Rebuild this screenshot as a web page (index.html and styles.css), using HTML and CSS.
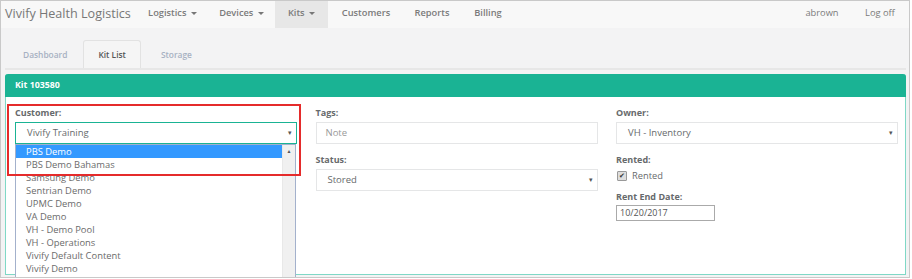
FILE: index.html
```html
<!DOCTYPE html>
<html>
<head>
<meta charset="UTF-8">
<title>Vivify Health Logistics - Kit List</title>
<link rel="stylesheet" href="styles.css">
</head>
<body>
<div class="frame">
  <nav class="navbar">
    <span class="brand">Vivify Health Logistics</span>
    <ul class="nav">
      <li class="w-log">Logistics <span class="caret"></span></li>
      <li class="w-dev">Devices <span class="caret"></span></li>
      <li class="w-kit active">Kits <span class="caret"></span></li>
      <li class="w-cus">Customers</li>
      <li class="w-rep">Reports</li>
      <li class="w-bil">Billing</li>
    </ul>
    <ul class="nav nav-right">
      <li class="w-usr">abrown</li>
      <li class="w-off">Log off</li>
    </ul>
  </nav>

  <div class="content">
    <ul class="tabs">
      <li class="tab">Dashboard</li>
      <li class="tab active">Kit List</li>
      <li class="tab">Storage</li>
    </ul>

    <div class="panel">
      <div class="panel-heading">Kit 103580</div>
      <div class="panel-body">
        <div class="col col-customer">
          <div class="group">
            <label>Customer:</label>
            <div class="select focused">Vivify Training<span class="arrow">▾</span></div>
          </div>
          <div class="listbox">
            <ul class="options">
              <li class="selected">PBS Demo</li>
              <li>PBS Demo Bahamas</li>
              <li>Samsung Demo</li>
              <li>Sentrian Demo</li>
              <li>UPMC Demo</li>
              <li>VA Demo</li>
              <li>VH - Demo Pool</li>
              <li>VH - Operations</li>
              <li>Vivify Default Content</li>
              <li>Vivify Demo</li>
            </ul>
            <div class="scrollbar"><span class="up">▲</span></div>
          </div>
          <div class="highlight"></div>
        </div>

        <div class="col">
          <div class="group">
            <label>Tags:</label>
            <div class="input placeholder">Note</div>
          </div>
          <div class="group">
            <label>Status:</label>
            <div class="select">Stored<span class="arrow">▾</span></div>
          </div>
        </div>

        <div class="col">
          <div class="group">
            <label>Owner:</label>
            <div class="select">VH - Inventory<span class="arrow">▾</span></div>
          </div>
          <div class="group tight">
            <label>Rented:</label>
            <div class="check"><span class="box">✔</span>Rented</div>
          </div>
          <div class="group">
            <label>Rent End Date:</label>
            <div class="date">10/20/2017</div>
          </div>
        </div>
      </div>
    </div>
  </div>
</div>
</body>
</html>
```

FILE: styles.css
```css
html, body {
  margin:0;
  padding:0;
  background:#fff;
  font-family:"Open Sans", "Liberation Sans", sans-serif;
  color:#676a6c;
}
.frame {
  width:908px;
  height:276px;
  border:1px solid #c9c9c9;
  background:#f3f3f4;
  overflow:hidden;
}

/* top navbar */
.navbar {
  display:flex;
  align-items:stretch;
  height:27px;
  background:#f8f8f8;
}
.brand {
  font-size:12.6px;
  color:#777;
  line-height:25px;
  padding:0 0 0 4px;
  width:132px;
}
.nav {
  display:flex;
  list-style:none;
  margin:0;
  padding:0;
}
.nav li {
  font-size:9.3px;
  font-weight:600;
  color:#7b7b7b;
  line-height:24px;
  text-align:center;
}
.nav li.active { background:#e7e7e7; }
.caret {
  display:inline-block;
  width:0;
  height:0;
  margin-left:2px;
  vertical-align:middle;
  border-top:3px solid #777;
  border-left:3px solid transparent;
  border-right:3px solid transparent;
}
.w-log { width:71px; }
.w-dev { width:67px; }
.w-kit { width:53px; }
.w-cus { width:76px; }
.w-rep { width:56px; }
.w-bil { width:56px; }
.nav-right { margin-left:auto; }
.nav-right li { font-weight:400; }
.w-usr { width:58px; }
.w-off { width:58px; }

/* tabs */
.content { padding:0 3px 0 4px; }
.tabs {
  display:flex;
  list-style:none;
  margin:0;
  padding:12px 0 0 2px;
  border-bottom:2px solid #e7e7e7;
  height:28px;
}
.tab {
  font-size:8.4px;
  font-weight:600;
  color:#a7b1c2;
  padding:0 15px;
  line-height:27px;
  border:1px solid transparent;
  border-bottom:none;
  border-radius:3px 3px 0 0;
}
.tab.active {
  color:#555;
  background:#f5f5f5;
  border-color:#e2e2e2;
  padding:0 14px;
  margin-right:4px;
}

/* panel */
.panel {
  margin-top:4px;
  border:1px solid #7fd8c6;
  border-top:none;
  border-radius:3px 3px 0 0;
  background:#fff;
  height:200px;
}
.panel-heading {
  background:#1ab394;
  color:#fff;
  font-size:8.8px;
  font-weight:700;
  height:23px;
  line-height:23px;
  padding-left:10px;
  border-radius:3px 3px 0 0;
  margin:0 -1px;
}
.panel-body {
  display:grid;
  grid-template-columns:282px 282px 282px;
  column-gap:18.5px;
  padding:10px 9px 0 9px;
}
.col { position:relative; }
.group { margin-bottom:10px; }
.group.tight { margin-bottom:8px; }
label {
  display:block;
  font-size:9px;
  font-weight:700;
  color:#676a6c;
  line-height:12px;
  margin-bottom:3px;
}
.select, .input {
  position:relative;
  height:20px;
  line-height:20px;
  border:1px solid #e5e6e7;
  font-size:9.5px;
  padding-left:11px;
  color:#676a6c;
}
.select.focused { border-color:#1ab394; }
.input.placeholder { color:#999; padding-left:9px; }
.arrow {
  position:absolute;
  right:4px;
  top:0;
  font-size:7px;
  color:#555;
}

/* open dropdown list */
.listbox {
  position:absolute;
  top:37px;
  left:0;
  width:279px;
  height:140px;
  border:1px solid #a3b1cc;
  background:#fff;
  display:flex;
  z-index:2;
}
.options {
  flex:1;
  list-style:none;
  margin:0;
  padding:0;
}
.options li {
  font-size:9.4px;
  line-height:13px;
  height:13px;
  padding-left:10px;
  color:#6b6b6b;
}
.options li.selected {
  background:#3399ff;
  color:#fff;
}
.scrollbar {
  width:12px;
  background:#f0f0f0;
  border-left:1px solid #e8e8e8;
  text-align:center;
}
.up {
  display:block;
  font-size:5px;
  line-height:12px;
  color:#555;
}
.highlight {
  position:absolute;
  top:-3px;
  left:-8px;
  width:290px;
  height:68px;
  border:2px solid #e52b2b;
  z-index:3;
}

/* checkbox and date */
.check {
  font-size:9.3px;
  line-height:14px;
  display:flex;
  align-items:center;
  color:#676a6c;
}
.box {
  display:inline-block;
  width:8px;
  height:8px;
  line-height:8px;
  font-size:7px;
  text-align:center;
  border:1px solid #999;
  background:#ddd;
  color:#333;
  margin:0 5px 0 1px;
  border-radius:1px;
}
.date {
  width:94px;
  height:14px;
  line-height:14px;
  font-size:9px;
  padding-left:3px;
  border:1px solid #aaa;
  color:#555;
  margin-top:-1px;
}
```
